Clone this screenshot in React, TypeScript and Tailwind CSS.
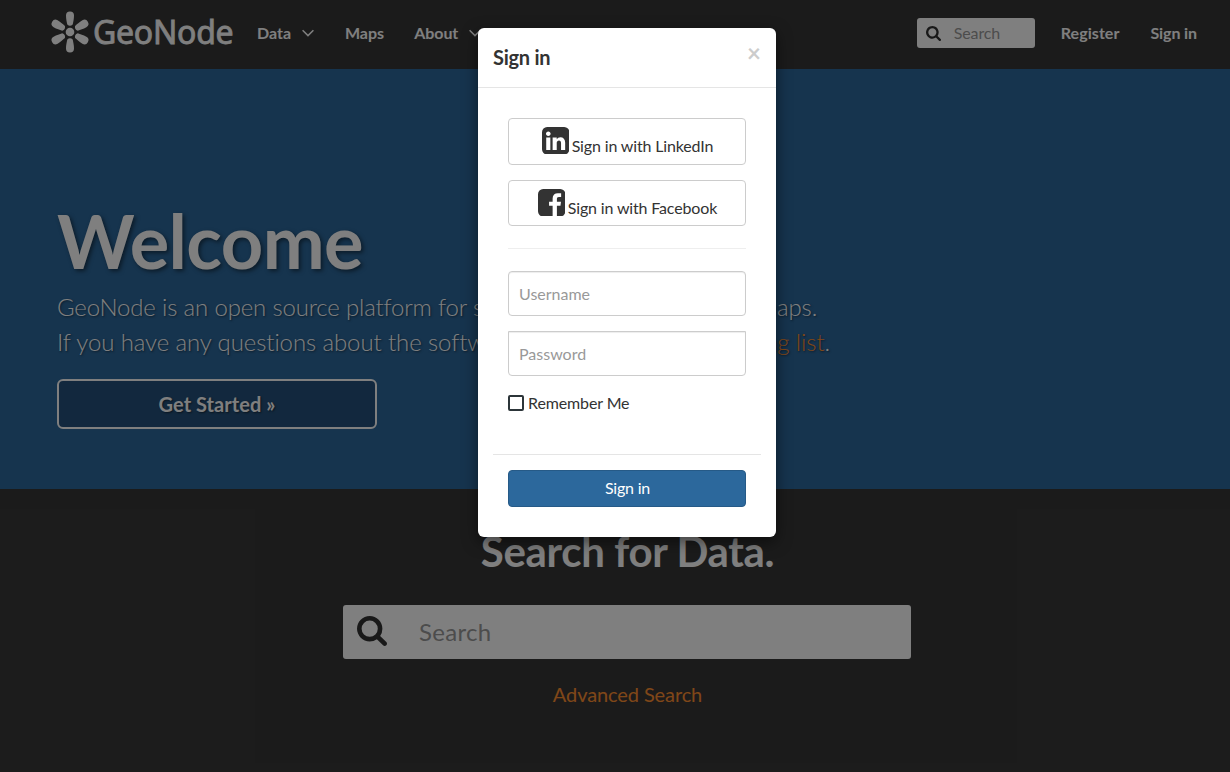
import React from "react";

const SEARCH =
  "M1216 832q0-185-131.5-316.5t-316.5-131.5-316.5 131.5-131.5 316.5 131.5 316.5 316.5 131.5 316.5-131.5 131.5-316.5zm512 832q0 52-38 90t-90 38q-54 0-90-38l-343-342q-179 124-399 124-143 0-273.5-55.5t-225-150-150-225-55.5-273.5 55.5-273.5 150-225 225-150 273.5-55.5 273.5 55.5 225 150 150 225 55.5 273.5q0 220-124 399l343 343q37 37 37 90z";
const LINKEDIN =
  "M365 1414h231v-694h-231v694zm246-908q-1-52-36-86t-93-34-94.5 34-36.5 86q0 51 35.5 85.5t92.5 34.5h1q59 0 95-34.5t36-85.5zm585 908h231v-398q0-154-73-233t-193-79q-136 0-209 117h2v-101h-231q3 66 0 694h231v-388q0-38 7-56 15-35 45-59.5t74-24.5q116 0 116 157v371zm468-998v960q0 119-84.5 203.5t-203.5 84.5h-960q-119 0-203.5-84.5t-84.5-203.5v-960q0-119 84.5-203.5t203.5-84.5h960q119 0 203.5 84.5t84.5 203.5z";
const FACEBOOK =
  "M1376 128q119 0 203.5 84.5t84.5 203.5v960q0 119-84.5 203.5t-203.5 84.5h-188v-595h199l30-232h-229v-148q0-56 23.5-84t91.5-28l122-1v-207q-63-9-178-9-136 0-217.5 80t-81.5 226v171h-200v232h200v595h-532q-119 0-203.5-84.5t-84.5-203.5v-960q0-119 84.5-203.5t203.5-84.5h960z";

function SquareIcon({ d }: { d: string }) {
  return (
    <svg viewBox="128 128 1536 1536" className="size-[27.4px] fill-[#333]">
      <path d={d} />
    </svg>
  );
}

function SearchIcon({ className }: { className: string }) {
  return (
    <svg viewBox="64 128 1664 1664" className={className}>
      <path d={SEARCH} />
    </svg>
  );
}

function Chevron() {
  return (
    <svg viewBox="0 0 12 8" className="ml-[11px] h-2 w-3 fill-none stroke-white">
      <path d="M0.6 1.2L6 6.6L11.4 1.2" strokeWidth="1.5" />
    </svg>
  );
}

function Logo() {
  return (
    <div className="flex w-[200px] items-center pb-[2px]">
      <svg viewBox="-20 -21 40 42" className="h-[42px] w-10 shrink-0 fill-white">
        <circle r="4.3" />
        {[0, 60, 120, 180, 240, 300].map((a) => (
          <path
            key={a}
            transform={`rotate(${a})`}
            d="M-2.7 -7.4C-3.2 -10 -4 -13 -4 -16.6A4 4 0 0 1 4 -16.6C4 -13 3.2 -10 2.7 -7.4Q0 -5 -2.7 -7.4Z"
          />
        ))}
      </svg>
      <span className="ml-[3px] font-['Noto_Sans',sans-serif] text-[32px] leading-none font-normal tracking-[-0.25px] [-webkit-text-stroke:0.8px_white]">
        GeoNode
      </span>
    </div>
  );
}

function Navbar() {
  return (
    <nav className="flex h-[69px] items-center bg-[#373737] pr-[57px] pb-[3px] pl-[50px] text-base font-bold text-white">
      <Logo />
      <a className="ml-[7px] flex items-center">Data<Chevron /></a>
      <a className="ml-[31px] tracking-[-0.1px]">Maps</a>
      <a className="ml-[30.5px] flex items-center tracking-[-0.1px]">About<Chevron /></a>
      <div className="ml-auto flex h-[30px] w-[118px] items-center rounded-[3px] bg-white pl-[9px]">
        <SearchIcon className="size-[15px] fill-[#333]" />
        <span className="ml-[13px] font-normal tracking-[-0.15px] text-[#999]">Search</span>
      </div>
      <a className="ml-[26px] tracking-[0.05px]">Register</a>
      <a className="ml-[31px] tracking-[-0.1px]">Sign in</a>
    </nav>
  );
}

function Hero() {
  return (
    <section className="h-[420px] bg-[#2c689c] px-[57px] pt-[130px] text-white">
      <h1 className="text-[74px] leading-[83px] font-bold tracking-[-0.6px] [text-shadow:2px_2px_4px_rgba(0,0,0,0.5)]">
        Welcome
      </h1>
      <p className="mt-[7px] text-[24px] leading-[35px] font-light tracking-[-0.11px] [font-variant-ligatures:none] [text-shadow:1px_1px_2px_rgba(0,0,0,0.5)]">
        <span className="tracking-[-0.17px]">GeoNode is an open source platform for </span>
        <span className="tracking-[-0.06px]">sharing geospatial data and maps.</span>
        <br />
        If you have any questions about the software or service, join our <a className="text-[#ff8f31]">mailing list</a>.
      </p>
      <button className="mt-[20px] h-[50px] w-80 rounded-md border-2 border-white bg-[#24517c] text-xl font-bold tracking-[0.05px] [text-shadow:1px_1px_2px_rgba(0,0,0,0.5)]">
        Get Started »
      </button>
    </section>
  );
}

function DataSearch() {
  return (
    <section className="flex h-[283px] flex-col items-center bg-[#373737] pt-[37px]">
      <h2 className="pl-px text-[42px] leading-[50px] font-bold tracking-[-0.35px] text-white">Search for Data.</h2>
      <div className="mt-[29px] flex h-[54px] w-[568px] items-center rounded-[3px] bg-white pl-3.5">
        <SearchIcon className="mb-[3px] size-[30px] fill-[#333]" />
        <span className="ml-8 text-2xl tracking-[0.3px] text-[#999]">Search</span>
      </div>
      <a className="mt-[20px] pl-px text-xl leading-[30px] tracking-[-0.1px] text-[#ff8f31]">Advanced Search</a>
    </section>
  );
}

function SocialButton({ icon, children }: { icon: React.ReactNode; children: React.ReactNode }) {
  return (
    <button className="flex h-[46.5px] w-full items-start justify-center rounded border border-[#ccc] bg-white pt-[8px] pl-px">
      {icon}
      <span className="ml-[2.5px] pt-[7px] leading-6 tracking-[-0.15px]">{children}</span>
    </button>
  );
}

function SignInDialog() {
  return (
    <div className="relative mt-7 h-[509px] w-[298px] rounded-md bg-white text-base text-[#333] shadow-[0_5px_15px_rgba(0,0,0,0.5)]">
      <header className="flex h-[60px] items-start justify-between border-b border-[#e5e5e5] px-[15px]">
        <h4 className="pt-[14px] text-xl leading-[30px] font-bold tracking-[-0.25px]">Sign in</h4>
        <button className="pt-[9px] text-2xl leading-8 font-bold text-[#ccc]">×</button>
      </header>
      <div className="px-[30px] pt-[30px]">
        <SocialButton icon={<SquareIcon d={LINKEDIN} />}>Sign in with LinkedIn</SocialButton>
        <div className="h-[15px]" />
        <SocialButton icon={<SquareIcon d={FACEBOOK} />}>Sign in with Facebook</SocialButton>
        <hr className="mt-[22px] mb-[22px] border-[#eee]" />
        <div className="flex h-[45px] items-center rounded border border-[#ccc] pl-2.5 text-[#999] shadow-[inset_0_1px_1px_rgba(0,0,0,0.075)]">
          Username
        </div>
        <div className="mt-[15px] flex h-[45px] items-center rounded-t-none rounded-b border border-[#ccc] pl-2.5 text-[#999] shadow-[inset_0_1px_1px_rgba(0,0,0,0.075)]">
          Password
        </div>
        <label className="mt-[15px] flex h-6 items-center">
          <span className="size-4 rounded-[2px] border-2 border-[#2c3539] bg-white" />
          <span className="ml-1 tracking-[-0.12px]">Remember Me</span>
        </label>
      </div>
      <footer className="mx-[15px] mt-[39px] border-t border-[#e5e5e5] px-[15px] pt-[15px]">
        <button className="h-[37px] w-full rounded border border-[#265a87] bg-[#2c689c] pb-0.5 pl-px tracking-[-0.2px] text-white">
          Sign in
        </button>
      </footer>
    </div>
  );
}

export default function App() {
  return (
    <div className="relative h-[772px] w-full overflow-hidden bg-[#373737] font-[Lato,sans-serif]">
      <div className="w-[1254px]">
        <Navbar />
        <Hero />
        <DataSearch />
      </div>
      <div className="absolute top-0 left-0 flex h-full w-[1254px] items-start justify-center bg-black/50">
        <SignInDialog />
      </div>
    </div>
  );
}
